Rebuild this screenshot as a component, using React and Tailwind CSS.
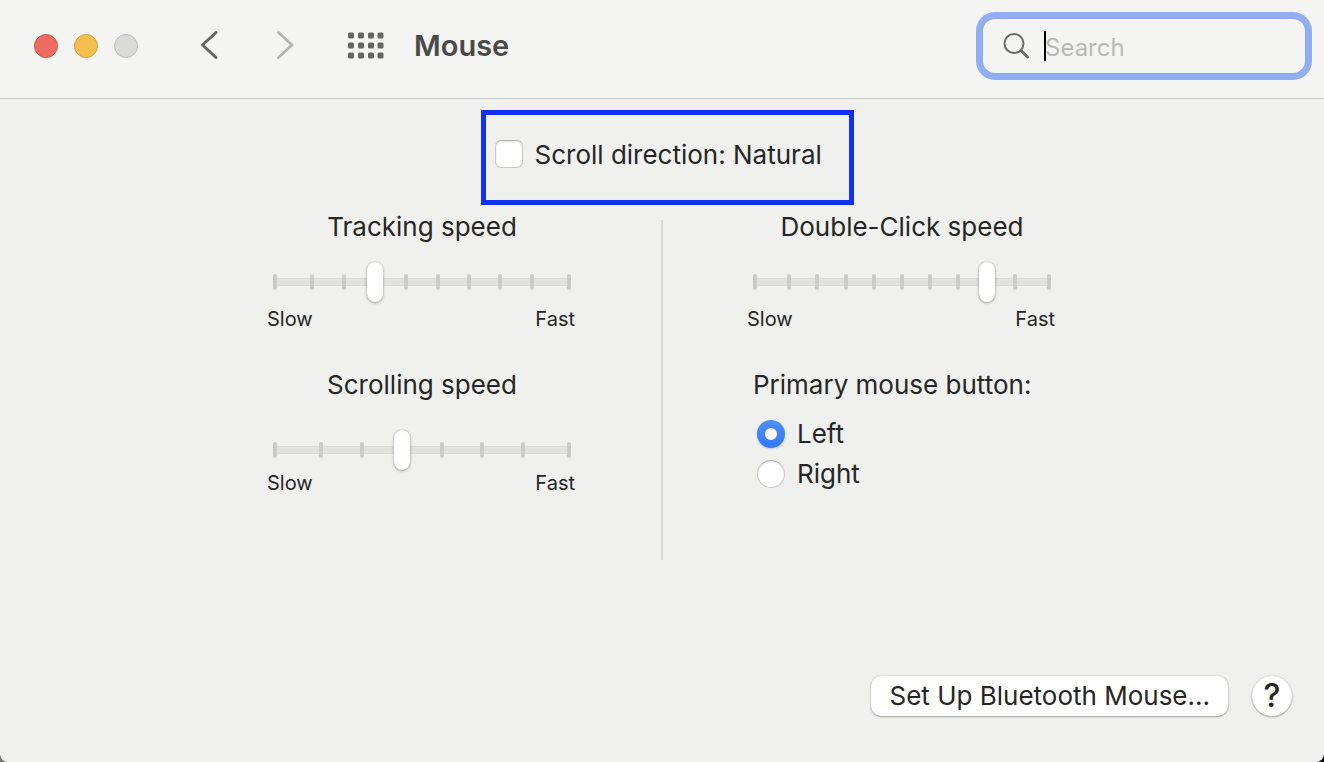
import React, { useState } from 'react';

const THUMB_WIDTH = 16;
const TICK_WIDTH = 4;

// Inner ticks follow the thumb's travel, the two end ticks sit flush with the track.
const tickPosition = (index, steps) => {
  if (index === 0) return '0px';
  if (index === steps) return `calc(100% - ${TICK_WIDTH}px)`;
  return `calc(${(THUMB_WIDTH - TICK_WIDTH) / 2}px + (100% - ${THUMB_WIDTH}px) * ${index / steps})`;
};

const SpeedSlider = ({ id, label, steps, initial, labelClass = 'mb-[19px]', scaleClass = 'mt-[5px]' }) => {
  const [value, setValue] = useState(initial);

  return (
    <div className="flex flex-col">
      <label htmlFor={id} className={`text-center text-[26px] leading-8 ${labelClass}`}>
        {label}
      </label>
      <div className="relative mx-1.5 flex h-10 items-center">
        <div className="h-2 w-full border-y border-[#dadad9] bg-[#e2e2e1]" />
        {Array.from({ length: steps + 1 }, (_, i) => (
          <span
            key={i}
            className="absolute top-3 h-4 w-1 rounded-sm bg-[#cbcbca]"
            style={{ left: tickPosition(i, steps) }}
          />
        ))}
        <input
          id={id}
          type="range"
          min={0}
          max={steps}
          value={value}
          onChange={(e) => setValue(Number(e.target.value))}
          className="absolute inset-0 m-0 h-10 w-full appearance-none bg-transparent [&::-webkit-slider-thumb]:h-10 [&::-webkit-slider-thumb]:w-4 [&::-webkit-slider-thumb]:appearance-none [&::-webkit-slider-thumb]:rounded-full [&::-webkit-slider-thumb]:bg-white [&::-webkit-slider-thumb]:shadow-[0_0_2px_rgba(0,0,0,0.2),0_1px_3px_rgba(0,0,0,0.3)]"
        />
      </div>
      <div className={`mr-0.5 flex justify-between text-[20px] leading-6 ${scaleClass}`}>
        <span>Slow</span>
        <span>Fast</span>
      </div>
    </div>
  );
};

const RadioOption = ({ name, value, label, checked, onChange }) => (
  <label className="flex h-10 items-center gap-3 text-[26px] leading-8">
    <input
      type="radio"
      name={name}
      value={value}
      checked={checked}
      onChange={() => onChange(value)}
      className="m-0 grid h-7 w-7 appearance-none place-items-center rounded-full border border-[#c9c9c8] border-t-[#b4b4b3] bg-white shadow-[inset_0_1px_2px_rgba(0,0,0,0.12)] checked:border-0 checked:bg-linear-to-b checked:from-[#4b91f7] checked:to-[#3577f6] checked:shadow-[0_1px_2px_rgba(53,119,246,0.3)] checked:before:h-3 checked:before:w-3 checked:before:rounded-full checked:before:bg-white checked:before:content-['']"
    />
    {label}
  </label>
);

const Toolbar = () => {
  const [query, setQuery] = useState('');

  return (
    <header className="flex h-[99px] items-start border-b border-[#c8c8c7] bg-[#f4f4f2] pr-[19px] pl-[34px]">
      <div className="mt-[34px] flex gap-4">
        <button aria-label="Close" className="h-6 w-6 rounded-full border border-[#d9544a] bg-[#ed6b60]" />
        <button aria-label="Minimize" className="h-6 w-6 rounded-full border border-[#d8a03b] bg-[#f5bf4f]" />
        <button aria-label="Zoom" className="h-6 w-6 rounded-full border border-[#bcbcbb] bg-[#dadad9]" />
      </div>
      <button aria-label="Back" className="mt-7 ml-[60px] text-[#656564]">
        <svg width="24" height="34" viewBox="0 0 24 34" fill="none" stroke="currentColor" strokeWidth="3" strokeLinecap="round" strokeLinejoin="round">
          <path d="M18 4.500 4.500 17 18 29.500" />
        </svg>
      </button>
      <button aria-label="Forward" className="mt-7 ml-[50px] text-[#b5b5b4]">
        <svg width="24" height="34" viewBox="0 0 24 34" fill="none" stroke="currentColor" strokeWidth="3" strokeLinecap="round" strokeLinejoin="round">
          <path d="M6.500 4.500 20 17 6.500 29.500" />
        </svg>
      </button>
      <button aria-label="Show All" className="mt-8 ml-[52px] text-[#656564]">
        <svg width="36" height="27" viewBox="0 0 36 27" fill="currentColor">
          {[0, 10, 20].map((y) =>
            [0, 10, 20, 29.5].map((x) => <rect key={`${x}-${y}`} x={x} y={y + 0.5} width="6" height="6" rx="1.500" />)
          )}
        </svg>
      </button>
      <h1 className="mt-[30px] ml-[30px] text-[29px] leading-8 font-semibold text-[#4a4a48]">Mouse</h1>

      <div className="mt-[19px] ml-auto flex h-[54px] w-[322px] items-center rounded-xl bg-[#f4f4f2] pr-4 pl-5 shadow-[0_0_0_1px_#8da8ea,0_0_0_7px_#92aef2]">
        <svg width="28" height="28" viewBox="0 0 28 28" fill="none" stroke="#6c6c6b" strokeLinecap="round" className="shrink-0">
          <circle cx="11" cy="11.500" r="9.500" strokeWidth="2" />
          <path d="M18 18.500 24.500 25" strokeWidth="3" />
        </svg>
        <span className="ml-[13px] h-[30px] w-0.5 shrink-0 bg-black" />
        <input
          type="search"
          aria-label="Search"
          placeholder="Search"
          value={query}
          onChange={(e) => setQuery(e.target.value)}
          className="-ml-px w-full min-w-0 bg-transparent pt-[3px] text-[24px] leading-8 outline-none placeholder:text-[#b9b9b8]"
        />
      </div>
    </header>
  );
};

export default function App() {
  const [natural, setNatural] = useState(false);
  const [primary, setPrimary] = useState('left');

  return (
    <div className="bg-linear-to-r from-[#777776] to-black">
      <div className="flex min-h-screen flex-col overflow-hidden rounded-b-lg bg-[#f0f0ee] font-['Inter','Liberation_Sans',sans-serif] text-[#262626]">
        <Toolbar />

        <main className="flex grow flex-col">
          <div className="flex justify-center pt-[11px] pl-2.5">
            <label className="flex h-[95px] w-[373px] items-start gap-3 border-5 border-[#1230f5] pt-[25px] pl-[9px] text-[26px] leading-8">
              <input
                type="checkbox"
                checked={natural}
                onChange={(e) => setNatural(e.target.checked)}
                className="m-0 h-7 w-7 shrink-0 appearance-none rounded-md border border-[#c9c9c8] border-t-[#b4b4b3] bg-white shadow-[inset_0_1px_2px_rgba(0,0,0,0.12)] checked:bg-[#3577f6]"
              />
              <span className="-mt-px">Scroll direction: Natural</span>
            </label>
          </div>

          <div className="mt-1.5 grid grid-cols-[1fr_2px_1fr] gap-x-[84px]">
            <section className="flex w-[310px] flex-col gap-[38px] justify-self-end">
              <SpeedSlider id="tracking" label="Tracking speed" steps={9} initial={3} />
              <SpeedSlider
                id="scrolling"
                label="Scrolling speed"
                steps={7}
                initial={3}
                labelClass="mb-[29px]"
                scaleClass="mt-px"
              />
            </section>

            <div className="mt-[9px] h-[340px] bg-[#d8d8d7]" />

            <section className="flex w-[310px] flex-col gap-[38px]">
              <SpeedSlider id="double-click" label="Double-Click speed" steps={10} initial={8} />
              <fieldset className="pl-1.5">
                <legend className="text-[26px] leading-8">Primary mouse button:</legend>
                <div className="mt-[13px] pl-1">
                  <RadioOption name="primary" value="left" label="Left" checked={primary === 'left'} onChange={setPrimary} />
                  <RadioOption name="primary" value="right" label="Right" checked={primary === 'right'} onChange={setPrimary} />
                </div>
              </fieldset>
            </section>
          </div>
        </main>

        <footer className="flex justify-end gap-6 pr-8 pb-[46px]">
          <button className="h-10 rounded-[10px] bg-white px-[18px] text-[26px] leading-8 shadow-[0_0_2px_rgba(0,0,0,0.2),0_1px_2px_rgba(0,0,0,0.3)]">
            Set Up Bluetooth Mouse...
          </button>
          <button
            aria-label="Help"
            className="h-10 w-10 rounded-full bg-white text-[32px] leading-10 font-medium shadow-[0_0_2px_rgba(0,0,0,0.2),0_1px_2px_rgba(0,0,0,0.3)]"
          >
            ?
          </button>
        </footer>
      </div>
    </div>
  );
}
